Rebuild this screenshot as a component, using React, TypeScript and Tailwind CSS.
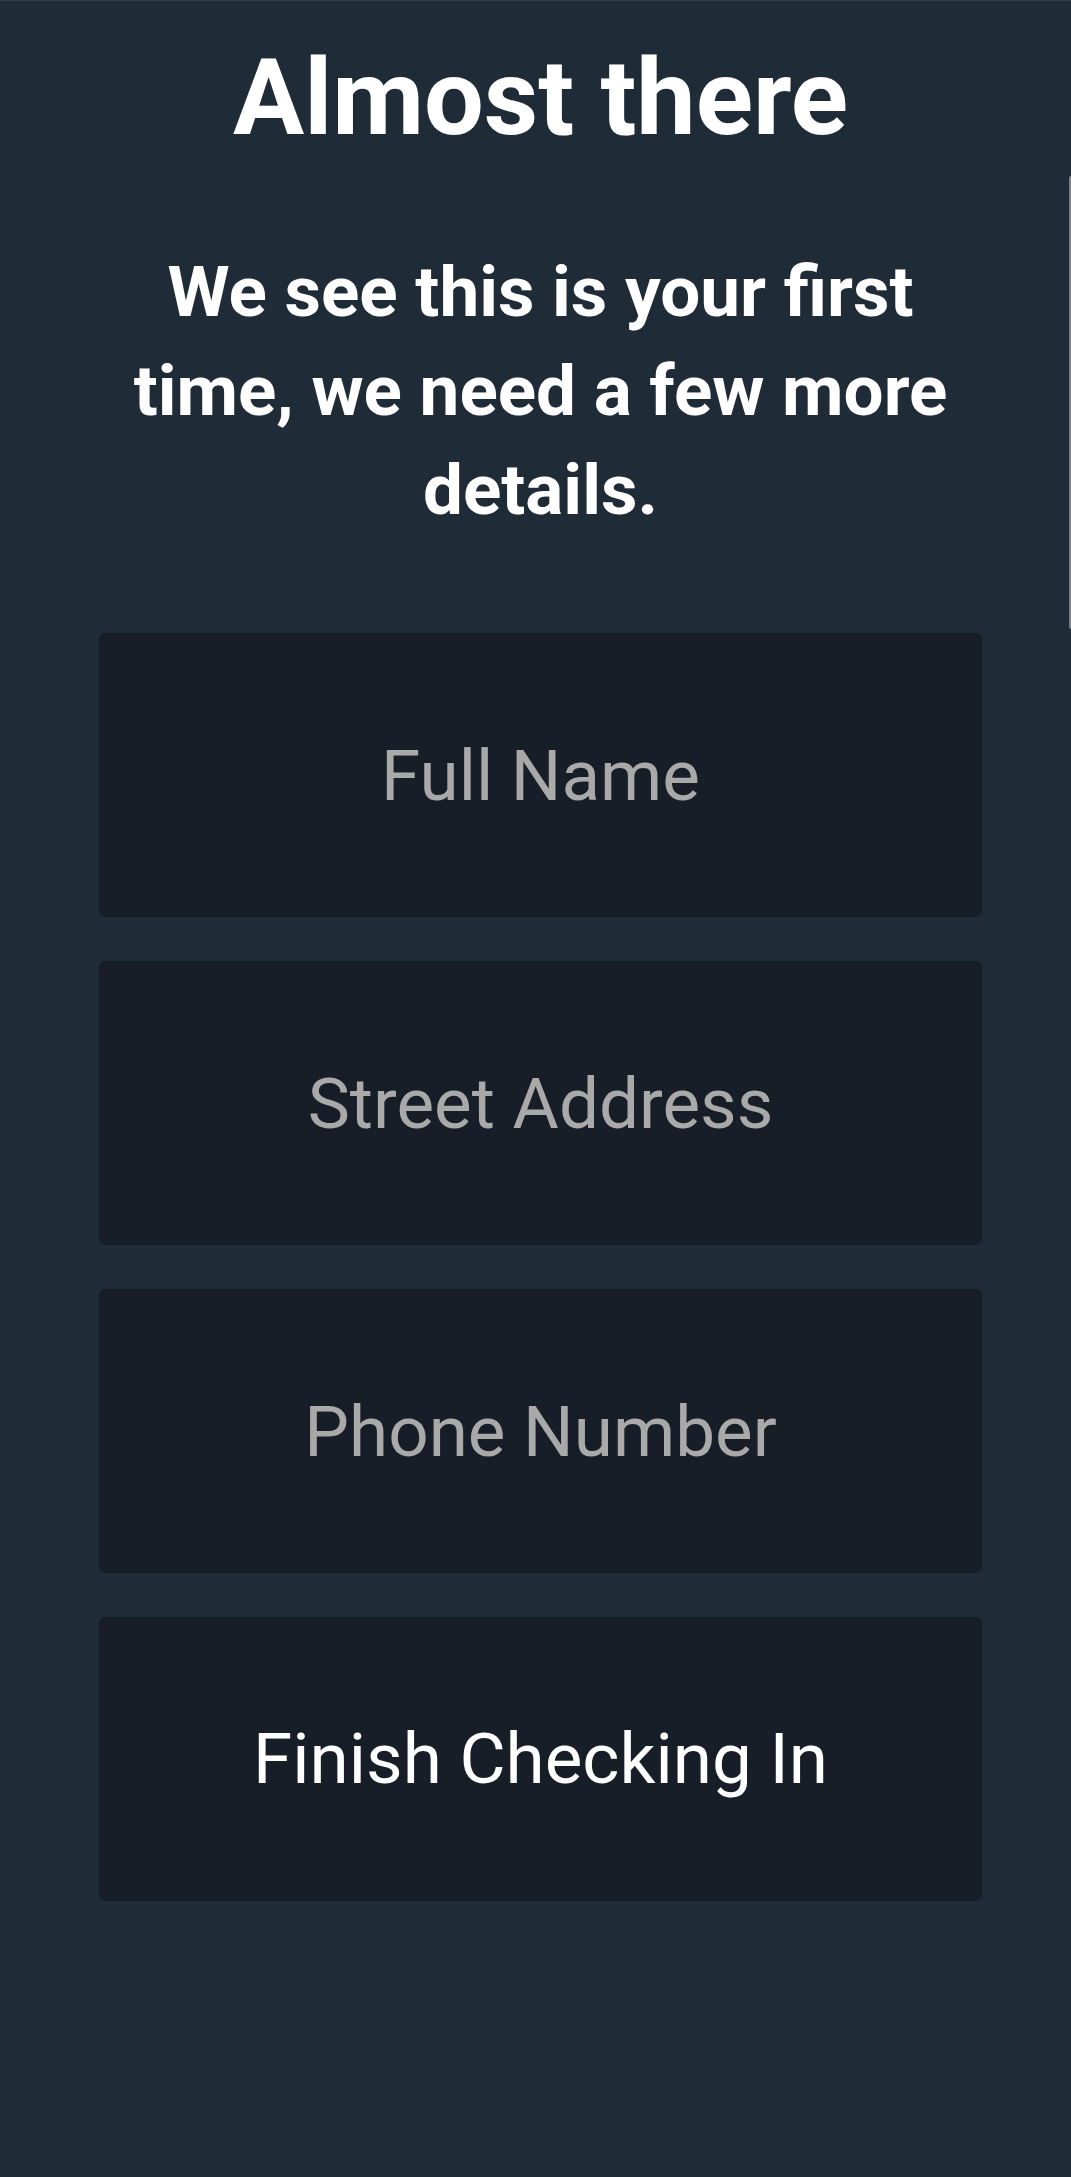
const fields = [
  { id: "name", label: "Full Name", type: "text" },
  { id: "address", label: "Street Address", type: "text" },
  { id: "phone", label: "Phone Number", type: "tel" },
];

export default function App() {
  return (
    <main className="relative min-h-screen border-t border-[#343b42] bg-[#1f2b37] pt-[33px] pr-[89px] pb-16 pl-[99px] text-center font-['Roboto',sans-serif] text-white">
      <h1 className="text-[106px] leading-[128px] font-bold">Almost there</h1>
      <h2 className="mt-20 text-[71px] leading-[99px] font-bold">
        We see this is your first time, we need a few more details.
      </h2>
      <form className="mt-[94px] flex flex-col gap-11" onSubmit={(e) => e.preventDefault()}>
        {fields.map((f) => (
          <input
            key={f.id}
            id={f.id}
            name={f.id}
            type={f.type}
            aria-label={f.label}
            placeholder={f.label}
            className="h-[284px] w-full rounded-md bg-[#171e27] px-8 text-center text-[71px] text-white outline-none placeholder:text-[#a9a9a9]"
          />
        ))}
        <button type="submit" className="h-[284px] w-full rounded-md bg-[#171e27] text-[71px] text-white">
          Finish Checking In
        </button>
      </form>
      <div className="absolute top-[175px] right-0 h-[453px] w-[2px] rounded-l-full bg-[#7b8187]" />
    </main>
  );
}
